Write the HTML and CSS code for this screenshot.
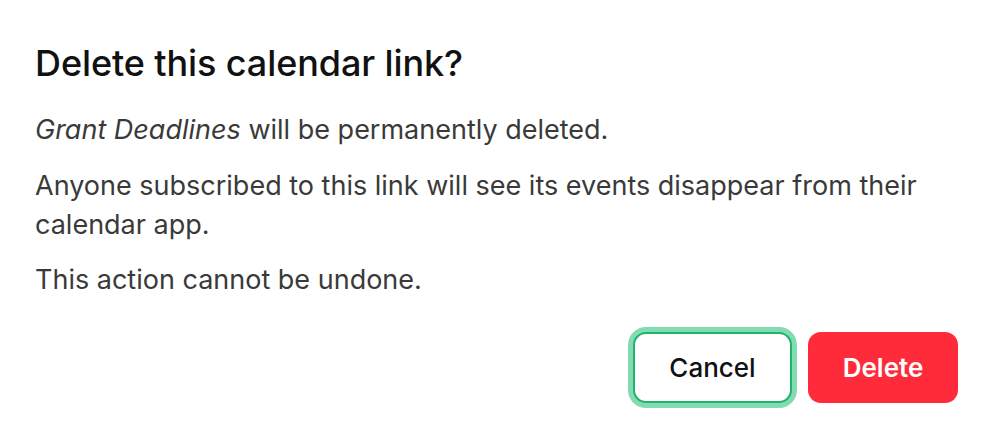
FILE: index.html
```html
<!DOCTYPE html>
<html lang="en">
<head>
<meta charset="utf-8">
<title>Delete this calendar link?</title>
<link rel="stylesheet" href="styles.css">
</head>
<body>
<div class="dialog" role="alertdialog" aria-labelledby="t">
  <h2 class="title" id="t">Delete this calendar link?</h2>
  <div class="body">
    <p><em>Grant Deadlines</em> will be permanently deleted.</p>
    <p>Anyone subscribed to this link will see its events disappear from their calendar app.</p>
    <p>This action cannot be undone.</p>
  </div>
  <div class="actions">
    <button class="btn btn-cancel">Cancel</button>
    <button class="btn btn-delete">Delete</button>
  </div>
</div>
</body>
</html>
```
FILE: styles.css
```css
* { box-sizing: border-box; }
html, body { margin: 0; padding: 0; background: #fff; }
body { font-family: Inter, "Noto Sans", sans-serif; }
.dialog {
  width: 993px;
  height: 444px;
  padding: 41px 35px 0 35px;
  display: flex;
  flex-direction: column;
}
.title {
  margin: 0;
  font-size: 36px;
  font-weight: 500;
  line-height: 44px;
  color: #111;
  letter-spacing: -0.1px;
}
.body { margin-top: 25px; }
.body p {
  margin: 0 0 16.5px 0;
  font-size: 27px;
  line-height: 39px;
  color: #3a3a3a;
}
.body em { font-style: italic; }
.actions {
  display: flex;
  justify-content: flex-end;
  gap: 16px;
  margin-top: 16px;
}
.btn {
  height: 71px;
  border-radius: 13px;
  font-family: Inter, "Noto Sans", sans-serif;
  font-size: 26px;
  cursor: pointer;
}
.btn-cancel {
  width: 159px;
  background: #fff;
  border: 2px solid #22b36a;
  box-shadow: 0 0 0 5px #82dcb2;
  color: #111;
  font-weight: 500;
}
.btn-delete {
  width: 150px;
  background: #ff2b3b;
  border: none;
  color: #fff;
  font-weight: 600;
}
```
